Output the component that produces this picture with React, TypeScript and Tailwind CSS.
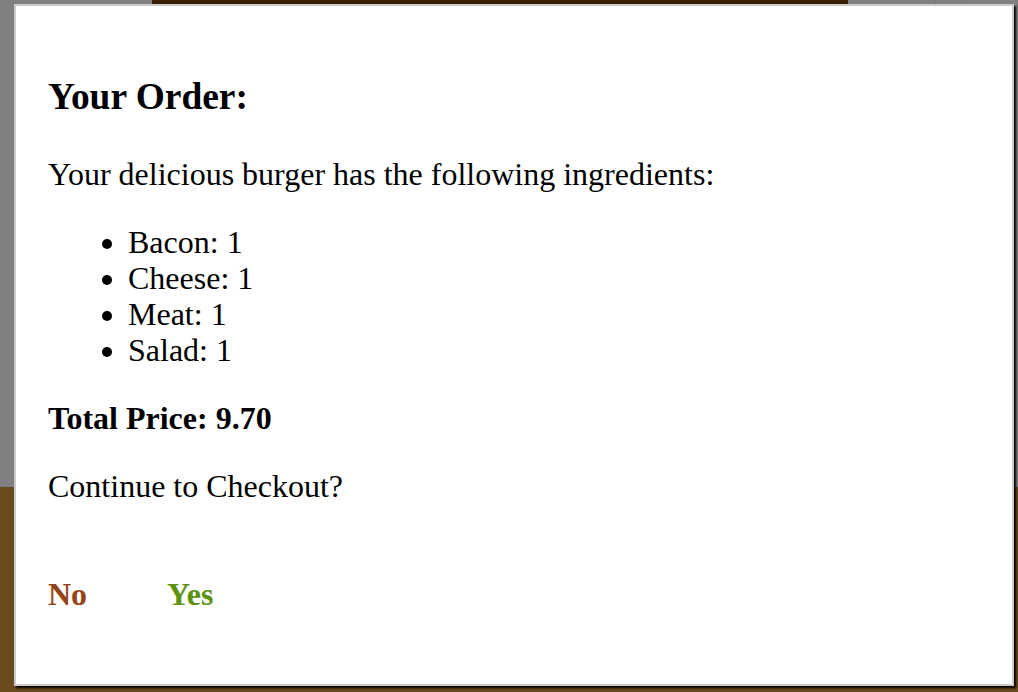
const ingredients: [string, number][] = [
  ['Bacon', 1],
  ['Cheese', 1],
  ['Meat', 1],
  ['Salad', 1],
];

function Button({ kind, first, children }: { kind: 'danger' | 'success'; first?: boolean; children: string }) {
  return (
    <button
      className={
        'inline-block bg-transparent border-none outline-none cursor-pointer font-bold text-[32px] leading-[36px] p-[20px] m-[20px] ' +
        (first ? 'ml-0 pl-0 ' : '') +
        (kind === 'danger' ? 'text-[#944317]' : 'text-[#5C9210]')
      }
    >
      {children}
    </button>
  );
}

export default function App() {
  return (
    <div className="relative w-full h-[692px] overflow-hidden font-['Liberation_Serif',serif] text-black">
      {/* page behind the backdrop */}
      <div className="flex flex-col h-full">
        <div className="h-[487px] bg-[#808080]">
          <div className="flex h-[4px]">
            <div className="w-[152px]" />
            <div className="w-[696px] bg-[#3a1d05]" />
            <div className="w-[87px]" />
            <div className="w-[1px] bg-[#777]" />
            <div className="w-[26px]" />
            <div className="w-[1px] bg-[#777]" />
          </div>
        </div>
        <div className="flex-1 bg-[#6b4a1e]" />
      </div>

      {/* modal */}
      <div className="absolute left-[14px] top-[4px] w-[1000px] bg-white border-2 border-[#ccc] shadow-[2px_2px_2px_black] p-[32px]">
        <h3 className="mt-[37.44px] mb-[37.44px] text-[37.44px] leading-[43px] font-bold">Your Order:</h3>
        <p className="my-[32px] text-[32px] leading-[36px]">Your delicious burger has the following ingredients:</p>
        <ul className="my-[32px] pl-[80px] list-disc text-[32px] leading-[36px]">
          {ingredients.map(([name, qty]) => (
            <li key={name}>
              {name}: {qty}
            </li>
          ))}
        </ul>
        <p className="my-[32px] text-[32px] leading-[36px]">
          <strong>Total Price: 9.70</strong>
        </p>
        <p className="my-[32px] text-[32px] leading-[36px]">Continue to Checkout?</p>
        <Button kind="danger" first>
          No
        </Button>
        <Button kind="success">Yes</Button>
      </div>
    </div>
  );
}
